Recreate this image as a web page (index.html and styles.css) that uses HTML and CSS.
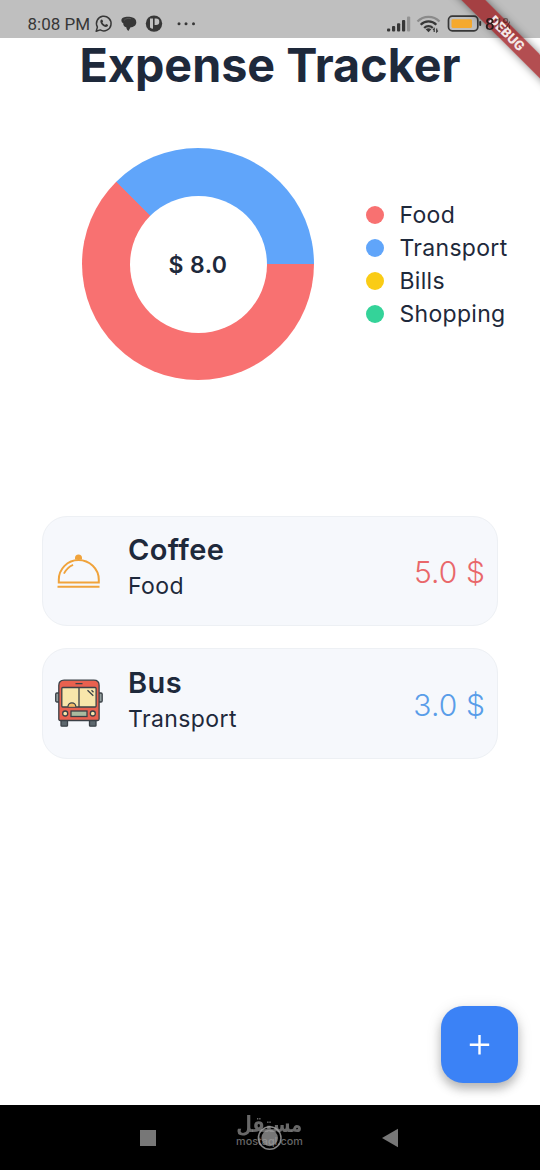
FILE: index.html
```html
<!DOCTYPE html>
<html lang="en">
<head>
<meta charset="utf-8">
<title>Expense Tracker</title>
<link rel="stylesheet" href="styles.css">
</head>
<body>
<div class="screen">
  <header class="status">
    <span class="clock">8:08 PM</span>
    <svg class="notif" width="106" height="22" viewBox="0 0 106 22">
      <g fill="none" stroke="#373737" stroke-width="1.500">
        <path d="M2.200 19.200l1.200-4.100A7.300 7.300 0 1 1 6.200 17.900z" stroke-linejoin="round"/>
      </g>
      <path d="M6.600 8.300c.5-1 1.500-1.100 1.900-.2l.6 1.300-.7 1.100c.7 1.200 1.500 1.900 2.700 2.500l1-1 1.700.8c.5.3.2 1.300-.4 1.700-1.800 1.100-4.300-.3-5.600-1.800-1.100-1.300-1.900-3-1.200-4.400z" fill="#373737"/>
      <path d="M29.500 5.500c1.500-1.100 7.500-1.100 9 0 1.900.4 3.900 2.200 3.800 5-.1 3.200-3 4.800-5.700 4.800l-2.200 3.600c-1.200-.7-1.800-2-2.100-3.700-2.300-.3-3.200-2-3-3.900-2.200-.8-2.900-5 .2-5.800z" fill="#373737"/>
      <path d="M30 8.500c1.500-2 4-2.500 7-1.800" stroke="#666" stroke-width=".6" fill="none"/>
      <circle cx="60" cy="11.600" r="8.200" fill="#373737"/>
      <path d="M56 6.500h3v10.200q-1.700 0-3-1.200zM60.600 6.500h1.500a3.200 3.200 0 0 1 0 6.400h-1.500z" fill="#c1c1c1"/>
      <g fill="#373737"><circle cx="85" cy="11.700" r="1.500"/><circle cx="92" cy="11.700" r="1.500"/><circle cx="99.500" cy="11.700" r="1.500"/></g>
    </svg>
    <svg class="signals" width="98" height="22" viewBox="0 0 98 22">
      <g fill="#373737"><rect x="2" y="16.500" width="3.200" height="3" rx="1"/><rect x="7" y="14" width="3.200" height="5.500" rx="1"/><rect x="12" y="11.300" width="3.200" height="8.200" rx="1"/><rect x="17" y="8" width="3.200" height="11.500" rx="1"/></g>
      <rect x="22" y="4.500" width="3.200" height="15" rx="1" fill="#939393"/>
      <g fill="none" stroke-width="2.300"><path d="M32.500 9.500a15.500 15.500 0 0 1 22 0" stroke="#8a8a8a"/><path d="M35.700 12.700a11 11 0 0 1 15.600 0M39.200 16a6 6 0 0 1 8.600 0" stroke="#373737"/></g>
      <path d="M40.700 17.300q2.800-2 5.600 0l-2.800 3z" fill="#373737"/>
      <path d="M49.200 20v-3.400l-1.200 1.200M51.700 16.500v3.400l1.200-1.200" fill="none" stroke="#373737" stroke-width="1.200"/>
      <rect x="63.500" y="4.200" width="29.300" height="14.600" rx="3.800" fill="none" stroke="#373737" stroke-width="1.700"/>
      <rect x="66.500" y="7.200" width="20.500" height="8.700" rx="1.300" fill="#f5a92d"/>
      <rect x="94.200" y="9" width="2" height="5" rx="1" fill="#373737"/>
    </svg>
    <span class="level">81%</span>
  </header>

  <div class="banner"><span class="ribbon">DEBUG</span></div>

  <main class="content">
    <h1 class="title">Expense Tracker</h1>
    <section class="summary">
      <div class="donut"><div class="hole">$ 8.0</div></div>
      <ul class="legend">
        <li><i class="dot food"></i>Food</li>
        <li><i class="dot transport"></i>Transport</li>
        <li><i class="dot bills"></i>Bills</li>
        <li><i class="dot shopping"></i>Shopping</li>
      </ul>
    </section>
    <section class="list">
      <article class="card">
        <svg class="icon dish" width="50" height="50" viewBox="0 0 50 50" fill="none" stroke="#f0a33b" stroke-width="2">
          <path d="M4.800 34.500v-2.800C4.800 21 13.500 12 24.500 12S44.800 21 44.800 31.700v2.800z"/>
          <path d="M3.500 38.700h42"/>
          <path d="M9.900 25.600q3.400-6.600 9.200-8.800" stroke-width="1.800"/>
          <path d="M21 11.500V10a3.500 3.500 0 0 1 7 0v1.500z" fill="#f0a33b" stroke="none"/>
        </svg>
        <div class="info"><h2>Coffee</h2><p>Food</p></div>
        <span class="amount red">5.0 $</span>
      </article>
      <article class="card">
        <svg class="icon bus" width="50" height="50" viewBox="0 0 50 50" stroke="#3b4147" stroke-width="1.300">
          <rect x="7" y="41" width="6.500" height="6.200" rx=".8" fill="#5d686e"/><rect x="35.500" y="41" width="6.500" height="6.200" rx=".8" fill="#5d686e"/>
          <rect x="1.700" y="14" width="4" height="9" rx="1.200" fill="#929e9e"/><rect x="44.200" y="14" width="4" height="9" rx="1.200" fill="#929e9e"/>
          <path d="M4.800 40V6.500q0-5.300 5.300-5.300h29.700q5.300 0 5.300 5.300V40q0 1.500-1.500 1.500H6.300Q4.800 41.500 4.800 40z" fill="#e9614f"/>
          <rect x="7.800" y="8.500" width="34.300" height="19.500" rx="1" fill="#f8e6ab"/>
          <path d="M25 8.500V28M21.500 4.600h7" fill="none"/>
          <path d="M14 27.800a3.900 3.900 0 0 1 7.800 0" fill="#f5bd68"/>
          <path d="M33.500 11.200l5.800 5.500M37.500 11.200l2 2" fill="none"/>
          <rect x="17" y="32" width="16" height="5.500" fill="#aaba9f"/>
          <circle cx="11.200" cy="34.500" r="2.500" fill="#f8e6ab"/><circle cx="38.800" cy="34.500" r="2.500" fill="#f8e6ab"/>
        </svg>
        <div class="info"><h2>Bus</h2><p>Transport</p></div>
        <span class="amount blue">3.0 $</span>
      </article>
    </section>
    <button class="fab" aria-label="Add"><svg width="22" height="22" viewBox="0 0 22 22"><path d="M10.500 1v19.400M.8 10.700h19.400" stroke="#fff" stroke-width="2.400"/></svg></button>
  </main>

  <footer class="nav">
    <svg width="16" height="16" viewBox="0 0 16 16"><path d="M0 0h16v16H0z" fill="#777"/></svg>
    <svg width="26" height="26" viewBox="0 0 26 26"><circle cx="13.700" cy="13" r="11.300" fill="none" stroke="#858585" stroke-width="1.500"/><circle cx="13.700" cy="13" r="8.300" fill="#777"/></svg>
    <svg width="16" height="20" viewBox="0 0 16 20"><path d="M0 10L16 .8v18.400z" fill="#777"/></svg>
    <div class="watermark"><span class="arabic" lang="ar" dir="rtl">مستقل</span><span class="domain">mostaql.com</span></div>
  </footer>
</div>
</body>
</html>
```
FILE: styles.css
```css
* { box-sizing: border-box; }
body, h1, h2, p, ul { margin: 0; padding: 0; }
body { background: #fff; font-family: Inter, sans-serif; color: #1e293b; }
.screen { position: relative; width: 540px; height: 1170px; display: flex; flex-direction: column; overflow: hidden; }

.status { height: 38px; flex: none; background: #bfbfbf; display: flex; align-items: flex-start; padding: 12px 0 0 27.500px; font-family: Roboto, sans-serif; color: #373737; }
.clock { font-size: 17px; line-height: 24px; width: 66px; white-space: nowrap; font-weight: 450; }
.signals { margin-left: 185.500px; }
.level { position: relative; z-index: 2; font-size: 17px; line-height: 24px; margin-left: 2px; font-weight: 500; color: transparent; background: linear-gradient(90deg, #2a1a1a 9px, rgba(42, 10, 10, .5) 12px); background-clip: text; -webkit-background-clip: text; width: 25px; letter-spacing: -1px; }

.banner { position: absolute; top: 0; right: 0; width: 100px; height: 110px; overflow: hidden; }
.ribbon { position: absolute; left: -13px; top: 24.500px; width: 160px; height: 16.500px; transform: rotate(45deg); background: rgba(158, 28, 32, .78); box-shadow: 0 0 8px rgba(0, 0, 0, .45); color: #f4e8e8; font: 900 13.500px/16.500px Roboto, sans-serif; text-align: center; }

.content { flex: 1; display: flex; flex-direction: column; }
.title { height: 54px; font-size: 46.700px; line-height: 54px; font-weight: 700; text-align: center; white-space: nowrap; }
.summary { display: flex; align-items: center; height: 232px; margin: 56px 0 0 82px; }
.donut { width: 232px; height: 232px; border-radius: 50%; display: grid; place-items: center; background: conic-gradient(from 90deg, #f87171 0 225deg, #60a5fa 225deg); }
.hole { width: 137px; height: 137px; border-radius: 50%; background: #fff; display: grid; place-items: center; font-size: 23px; font-weight: 600; letter-spacing: .4px; padding-top: 1px; }
.legend { list-style: none; margin-left: 51.500px; }
.legend li { display: flex; align-items: center; height: 33px; font-size: 23px; letter-spacing: .3px; }
.dot { width: 18px; height: 18px; border-radius: 50%; margin-right: 16px; }
.food { background: #f87171; }
.transport { background: #60a5fa; }
.bills { background: #facc15; }
.shopping { background: #34d399; }

.list { margin: 135.500px 42px 0; display: flex; flex-direction: column; gap: 22px; }
.card { height: 110.500px; border: 1px solid #edf0f4; border-radius: 25px; background: #f6f8fc; display: flex; align-items: center; padding: 0 12px 0 10.500px; }
.dish { margin-top: 4px; }
.bus { margin-top: 1px; }
.info { margin: -6px 0 0 24.500px; flex: 1; }
.info h2 { font-size: 29px; line-height: 37px; font-weight: 600; letter-spacing: .4px; }
.info p { font-size: 23px; line-height: 36px; letter-spacing: .4px; }
.amount { font-size: 30px; font-weight: 350; margin-top: 3px; letter-spacing: .1px; }
.red { color: #e9676a; }
.blue { color: #599de9; }

.fab { align-self: flex-end; margin: auto 22px 22px 0; width: 77px; height: 77px; border: 0; border-radius: 22px; padding: 0; background: #3b82f6; display: grid; place-items: center; box-shadow: 0 6px 10px rgba(0, 0, 0, .22), 0 3px 16px rgba(0, 0, 0, .12); }

.nav { position: relative; height: 65px; flex: none; background: #000; display: flex; align-items: center; justify-content: space-between; padding: 0 142px 0 140px; }
.watermark { position: absolute; left: 230px; top: 10px; width: 79px; display: flex; flex-direction: column; align-items: center; color: rgba(160, 160, 160, .65); }
.arabic { font: 700 22px/20px "DejaVu Sans", sans-serif; transform: scaleX(.82); white-space: nowrap; }
.domain { font: 500 10.800px/13px Inter, sans-serif; }
```
